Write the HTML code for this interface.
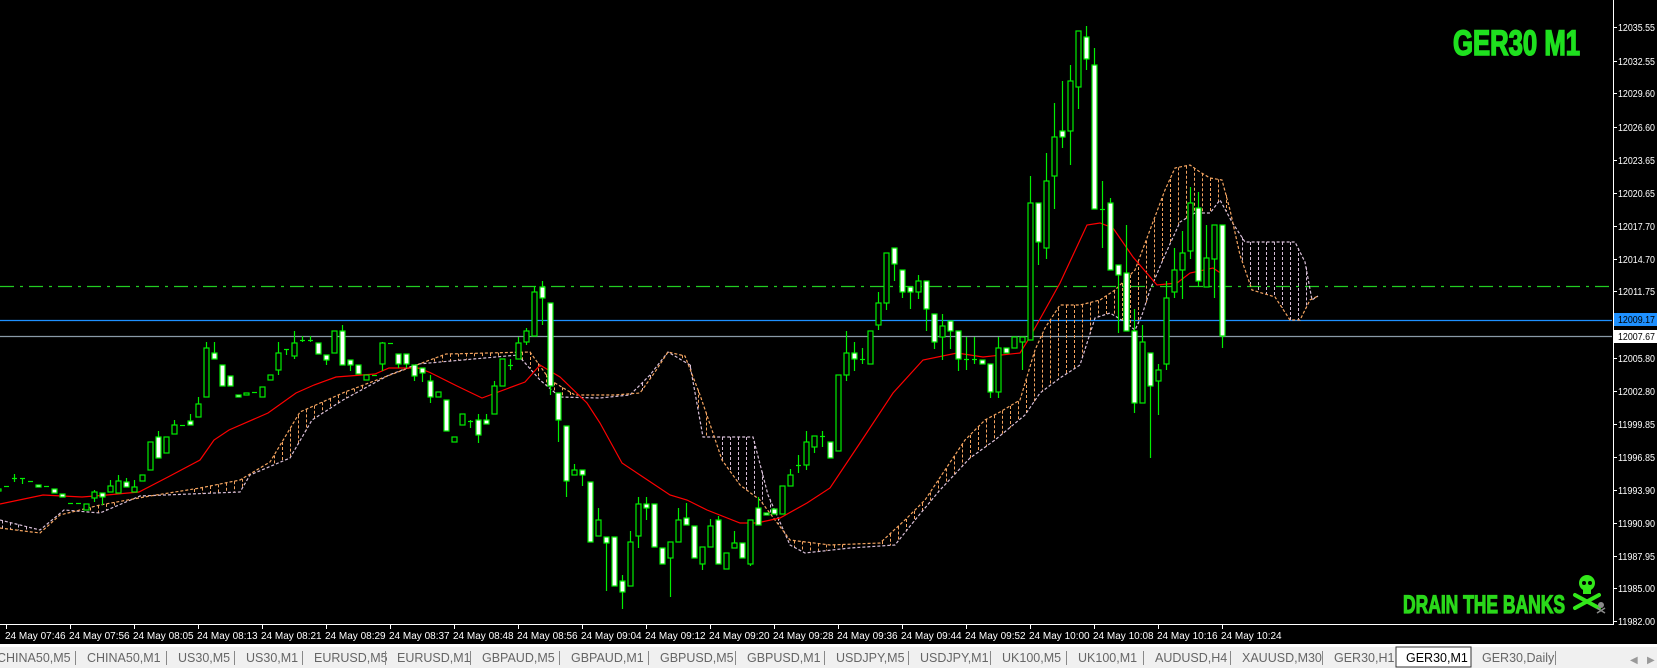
<!DOCTYPE html>
<html><head><meta charset="utf-8"><style>
html,body{margin:0;padding:0;background:#000;width:1657px;height:668px;overflow:hidden}
svg{display:block}
.ax{font-family:"Liberation Sans",sans-serif;font-size:10px;fill:#fff}
.tab{font-family:"Liberation Sans",sans-serif;font-size:12.5px;fill:#666}
</style></head><body>
<svg id="s" width="1657" height="668" xmlns="http://www.w3.org/2000/svg">
<rect width="1657" height="668" fill="#000"/>
<defs><clipPath id="cp"><rect x="0" y="0" width="1612" height="623"/></clipPath></defs>
<g id="chart" clip-path="url(#cp)">
<line x1="0" y1="286.5" x2="1610" y2="286.5" stroke="#22cc22" stroke-width="1.2" stroke-dasharray="14,6,3,6"/>
<line x1="0" y1="320.5" x2="1612" y2="320.5" stroke="#1e90ff" stroke-width="1.3"/>
<line x1="0" y1="336.5" x2="1612" y2="336.5" stroke="#8a9aa8" stroke-width="1.3"/>
<g id="cloud"></g>
<polyline fill="none" stroke="#ff0000" stroke-width="1.2" points="0,504 43,495 82,497 107,495 139,492 168,477 200,460 214,440 229,430 268,413 296,393 314,385 336,377 375,374 389,368 418,368 429,372 457,386 482,398 525,382 540,365 560,377 587,403 600,423 622,463 640,475 670,495 687,500 707,510 740,523 757,523 780,518 807,503 830,488 860,443 893,393 923,360 957,353 983,357 1020,353 1030,337 1060,283 1087,225 1100,223 1113,228 1133,257 1157,285 1177,283 1190,273 1213,268 1222,274"/>
<g id="candles"></g>
</g>
<text x="1453" y="55" font-family="'Liberation Sans Narrow','Liberation Sans',sans-serif" font-weight="bold" font-size="35" fill="#1fe01f" stroke="#1fe01f" stroke-width="1.6" textLength="127" lengthAdjust="spacingAndGlyphs">GER30 M1</text>
<text x="1403" y="613" font-family="'Liberation Sans Narrow','Liberation Sans',sans-serif" font-weight="bold" font-size="25" fill="#2ad81a" stroke="#2ad81a" stroke-width="1.2" textLength="162" lengthAdjust="spacingAndGlyphs">DRAIN THE BANKS</text>
<g fill="#33e81a" stroke="#33e81a">
<line x1="1575" y1="595" x2="1599" y2="608" stroke-width="4" stroke-linecap="round"/>
<line x1="1575" y1="608" x2="1599" y2="595" stroke-width="4" stroke-linecap="round"/>
<circle cx="1587" cy="583" r="8" stroke="none"/>
<rect x="1583" y="587" width="8" height="7" stroke="none"/>
</g>
<circle cx="1584" cy="583" r="2" fill="#000"/><circle cx="1590" cy="583" r="2" fill="#000"/>
<g fill="#8a8a8a" stroke="#8a8a8a"><circle cx="1601" cy="605" r="3" stroke="none"/><line x1="1597" y1="608" x2="1605" y2="613" stroke-width="1.5"/><line x1="1597" y1="613" x2="1605" y2="608" stroke-width="1.5"/></g>
<line x1="1613.5" y1="0" x2="1613.5" y2="624" stroke="#fff"/>
<line x1="0" y1="624.5" x2="1614" y2="624.5" stroke="#fff"/>
<g id="axis"></g>
<rect x="0" y="644" width="1657" height="3" fill="#fff"/>
<rect x="0" y="647" width="1657" height="21" fill="#f0f0f0"/>
<g id="tabs"></g>
<text x="1630" y="663" font-family="'Liberation Sans',sans-serif" font-size="10" fill="#999">◀</text>
<text x="1647" y="663" font-family="'Liberation Sans',sans-serif" font-size="10" fill="#999">▶</text>
</svg>
<script>
var NS="http://www.w3.org/2000/svg";
function el(p,t,a,txt){var e=document.createElementNS(NS,t);for(var k in a)e.setAttribute(k,a[k]);if(txt!=null)e.textContent=txt;p.appendChild(e);return e;}
var C=[[-2,489,490,'u'],[6,486,486,'h'],[14,478,478,'h',474,482],[22,478,478,'h',478,484],[30,481,481,'h'],[38,485,487,'d'],[46,486,486,'h'],[54,489,493,'d'],[62,494,497,'d'],[70,503,503,'h'],[78,503,503,'h'],[86,504,510,'u'],[94,492,498,'u',490,502],[102,493,497,'d',493,505],[110,486,492,'u',480,492],[118,481,493,'u',475,493],[126,482,487,'d',478,487],[134,487,492,'u',480,492],[142,475,481,'u'],[150,442,470,'u'],[158,437,458,'d',431,458],[166,437,453,'u'],[174,425,434,'u',420,434],[182,425,425,'h'],[190,421,425,'d',414,425],[198,404,417,'u',397,417],[206,348,397,'u',342,397],[214,353,359,'d',342,359],[222,365,386,'d'],[230,376,386,'d'],[238,395,397,'d'],[246,393,395,'u'],[254,392,392,'h'],[262,387,397,'u'],[270,375,380,'u'],[278,353,370,'u',342,375],[286,349,349,'h',349,355],[294,343,356,'u',331,359],[302,340,340,'h',336,342],[310,340,340,'h',336,342],[318,343,354,'d'],[326,355,360,'d',355,365],[334,331,353,'u'],[342,331,365,'d',325,365],[350,360,365,'d',360,371],[358,365,374,'d'],[366,375,380,'u'],[374,375,375,'h'],[382,343,364,'u',342,371],[390,343,343,'h'],[398,354,364,'d',354,368],[406,354,364,'d',354,368],[414,365,376,'d',365,381],[422,368,373,'d',368,382],[430,381,397,'d',375,403],[438,392,397,'u'],[446,400,431,'d'],[454,437,442,'u'],[462,414,425,'u'],[470,421,421,'h',420,428],[478,420,435,'d',414,443],[486,420,424,'d',414,424],[494,386,414,'u',381,414],[502,359,386,'u'],[510,365,365,'h',359,370],[518,343,359,'u',337,359],[526,331,342,'u',328,345],[534,292,336,'u',286,336],[542,287,298,'d',281,325],[550,303,386,'d',303,395],
[558,393,420,'d',393,442],[566,426,481,'d',426,497],[574,470,475,'u',464,475],[582,470,475,'d',470,486],[590,482,542,'d'],[598,520,536,'u',508,536],[606,537,543,'d',537,591],[614,537,586,'d'],[622,581,592,'d',575,609],[630,542,586,'u',531,586],[638,504,536,'u',497,548],[646,504,508,'d',497,520],[654,504,547,'d'],[662,548,564,'d'],[670,542,558,'u',542,597],[678,520,542,'u',508,542],[686,518,525,'d',503,525],[694,526,558,'d'],[702,547,564,'u',547,570],[710,526,547,'u',519,547],[718,520,564,'d',516,564],[726,553,569,'u'],[734,543,548,'u',531,548],[742,543,558,'d'],[750,520,564,'u',520,566],[758,508,525,'d',497,525],[766,513,515,'d'],[774,509,514,'d'],[782,486,514,'u'],[790,475,486,'u',469,486],[798,465,465,'h',455,473],[806,442,465,'u',431,470],[814,436,447,'u',436,453],[822,436,436,'h',431,447],[830,442,458,'d'],[838,375,451,'u'],[846,353,375,'u',331,381],[854,353,359,'d',342,371],[862,359,359,'h',348,364],[870,331,364,'u'],[878,303,325,'u',292,330],[886,253,303,'u',253,310],[894,248,264,'d',248,281],[902,270,292,'d',270,298],[910,287,292,'d',287,309],[918,281,292,'u',275,299],[926,281,309,'d',281,331],[934,314,342,'d',314,349],[942,326,337,'u',314,360],[950,321,331,'d',321,349],[958,331,359,'d',331,371],[966,359,359,'h',337,370],[974,359,359,'h',337,364],[982,360,364,'d'],[990,364,392,'d',364,398],[998,348,392,'u',337,398],[1006,348,353,'d'],[1014,337,348,'u'],[1022,337,342,'u',337,370],
[1030,203,340,'u',176,340],[1038,203,242,'d',203,265],[1046,181,248,'u',153,259],[1054,137,176,'u',103,209],[1062,131,137,'d',81,148],[1070,81,131,'u',65,165],[1078,31,87,'u',31,109],[1086,37,59,'d',26,70],[1094,65,209,'d',48,209],[1102,209,209,'h',181,248],[1110,203,270,'d',198,270],[1118,265,275,'d',265,333],[1126,273,331,'d',225,331],[1134,331,403,'d',309,413],[1142,342,403,'u',325,403],[1150,353,386,'d',353,458],[1158,370,381,'u',364,415],[1166,298,364,'u',281,370],[1174,270,292,'u',248,298],[1182,253,270,'u',231,299],[1190,203,251,'u',187,259],[1198,208,281,'d',192,287],[1206,258,287,'u',225,287],[1214,225,259,'u',225,298],[1222,225,336,'d',225,348]];
var cg=document.getElementById('candles');
C.forEach(function(c){var x=c[0],a=Math.min(c[1],c[2]),b=Math.max(c[1],c[2]),hi=c[4]!=null?c[4]:a,lo=c[5]!=null?c[5]:b;
 if(hi<a||lo>b)el(cg,'line',{x1:x+.5,x2:x+.5,y1:hi,y2:lo,stroke:'#00ee00','stroke-width':1.2});
 if(c[3]=='h'){el(cg,'line',{x1:x-2,x2:x+3,y1:a+.5,y2:a+.5,stroke:'#00ee00','stroke-width':1.2});}
 else el(cg,'rect',{x:x-2,y:a,width:5,height:Math.max(b-a,2),fill:c[3]=='d'?'#fff':'#000',stroke:'#00ee00','stroke-width':1.2});
});
var A=[[0,528],[40,533],[60,515],[100,505],[150,496],[200,488],[240,480],[270,462],[300,412],[345,392],[390,375],[446,354],[530,352],[550,380],[575,395],[615,395],[640,393],[655,372],[668,352],[685,356],[700,395],[712,430],[722,460],[740,485],[760,500],[790,540],[830,545],[880,543],[905,520],[925,500],[945,470],[965,440],[985,420],[1000,412],[1020,400],[1035,350],[1045,328],[1060,305],[1080,305],[1100,300],[1115,290],[1135,270],[1150,230],[1165,190],[1175,168],[1190,165],[1200,172],[1210,178],[1222,180],[1230,210],[1240,255],[1252,290],[1275,297],[1290,320],[1300,320],[1310,300],[1318,296]];
var B=[[0,520],[40,530],[64,510],[100,513],[140,496],[240,492],[250,475],[290,458],[312,420],[343,400],[389,375],[418,364],[518,355],[540,380],[560,397],[600,398],[630,395],[650,375],[668,352],[690,365],[703,437],[753,437],[768,495],[790,545],[805,553],[850,548],[895,545],[915,520],[940,490],[970,458],[995,440],[1025,415],[1040,393],[1060,378],[1080,365],[1095,318],[1110,313],[1125,322],[1135,330],[1142,315],[1150,290],[1165,255],[1180,222],[1195,213],[1210,213],[1220,200],[1232,222],[1245,242],[1295,242],[1305,262],[1312,300],[1318,296]];
function interp(P,x){if(x<P[0][0]||x>P[P.length-1][0])return null;for(var i=1;i<P.length;i++){if(x<=P[i][0]){var t=(x-P[i-1][0])/(P[i][0]-P[i-1][0]);return P[i-1][1]+t*(P[i][1]-P[i-1][1]);}}return null;}
var cl=document.getElementById('cloud');
for(var x=2;x<1320;x+=8){var a=interp(A,x),b=interp(B,x);if(a==null||b==null)continue;if(Math.abs(a-b)<4)continue;
 el(cl,'line',{x1:x+.5,x2:x+.5,y1:Math.min(a,b),y2:Math.max(a,b),stroke:a<b?'#f4a460':'#d8bfd8','stroke-width':1,'stroke-dasharray':'3,2'});}
el(cl,'polyline',{points:B.map(function(p){return p.join(',')}).join(' '),fill:'none',stroke:'#d8bfd8','stroke-width':1.2,'stroke-dasharray':'3,2'});
el(cl,'polyline',{points:A.map(function(p){return p.join(',')}).join(' '),fill:'none',stroke:'#f4a460','stroke-width':1.2,'stroke-dasharray':'3,2'});
var ax=document.getElementById('axis');
var P=[["12035.55",27],["12032.55",61],["12029.60",93],["12026.60",127],["12023.65",160],["12020.65",193],["12017.70",226],["12014.70",259],["12011.75",291],["12005.80",358],["12002.80",391],["11999.85",424],["11996.85",457],["11993.90",490],["11990.90",523],["11987.95",556],["11985.00",588],["11982.00",621]];
P.forEach(function(p){el(ax,'line',{x1:1613,x2:1617,y1:p[1]+.5,y2:p[1]+.5,stroke:'#fff'});el(ax,'text',{x:1618,y:p[1]+4,'class':'ax',textLength:37,lengthAdjust:'spacingAndGlyphs'},p[0]);});
el(ax,'rect',{x:1614,y:313,width:43,height:13,fill:'#1e90ff'});
el(ax,'text',{x:1618,y:323,'class':'ax',style:'fill:#000',textLength:37,lengthAdjust:'spacingAndGlyphs'},"12009.17");
el(ax,'rect',{x:1614,y:330,width:43,height:13,fill:'#fff'});
el(ax,'text',{x:1618,y:340,'class':'ax',style:'fill:#000',textLength:37,lengthAdjust:'spacingAndGlyphs'},"12007.67");
var T=["07:46","07:56","08:05","08:13","08:21","08:29","08:37","08:48","08:56","09:04","09:12","09:20","09:28","09:36","09:44","09:52","10:00","10:08","10:16","10:24"];
T.forEach(function(t,i){var x=6+64*i;el(ax,'line',{x1:x+.5,x2:x+.5,y1:624,y2:629,stroke:'#fff'});el(ax,'text',{x:x-1,y:639,'class':'ax'},"24 May "+t);});
var tb=document.getElementById('tabs');
var TB=[["CHINA50,M5",-3],["CHINA50,M1",87],["US30,M5",178],["US30,M1",246],["EURUSD,M5",314],["EURUSD,M1",397],["GBPAUD,M5",482],["GBPAUD,M1",571],["GBPUSD,M5",660],["GBPUSD,M1",747],["USDJPY,M5",836],["USDJPY,M1",920],["UK100,M5",1002],["UK100,M1",1078],["AUDUSD,H4",1155],["XAUUSD,M30",1242],["GER30,H1",1334],["GER30,M1",1406],["GER30,Daily",1482]];
el(tb,'rect',{x:1396,y:647,width:75,height:20,fill:'#fff',stroke:'#333','stroke-width':1});
TB.forEach(function(t,i){el(tb,'text',{x:t[1],y:662,'class':'tab',style:t[0]=="GER30,M1"?'fill:#000':''},t[0]);
 if(i>0&&t[0]!="GER30,M1"&&t[0]!="GER30,Daily")el(tb,'line',{x1:t[1]-11.5,x2:t[1]-11.5,y1:651,y2:665,stroke:'#888'});});
el(tb,'line',{x1:1555.5,x2:1555.5,y1:651,y2:665,stroke:'#888'});
</script>
</body></html>
